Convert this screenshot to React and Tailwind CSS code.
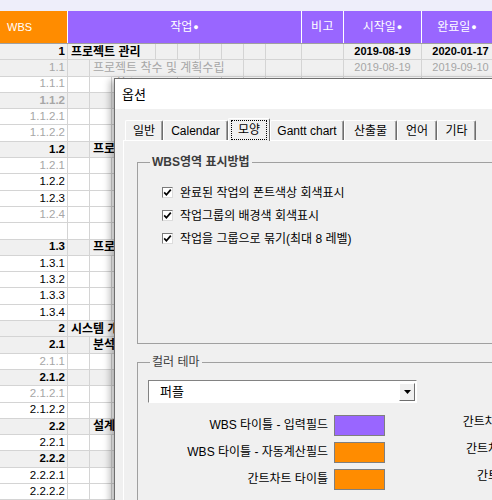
const ROWS = [
  { w: '1', lvl: 0, name: '프로젝트 관리', b: 1, g: 1, s: '2019-08-19', e: '2020-01-17' },
  { w: '1.1', lvl: 1, name: '프로젝트 착수 및 계획수립', g: 1, grey: 1, s: '2019-08-19', e: '2019-09-10' },
  { w: '1.1.1', lvl: 2, name: '착수보고', grey: 1 },
  { w: '1.1.2', lvl: 2, name: '계획수립', b: 1, g: 1, grey: 1 },
  { w: '1.1.2.1', lvl: 3, name: '일정계획', grey: 1 },
  { w: '1.1.2.2', lvl: 3, name: '자원계획', grey: 1 },
  { w: '1.2', lvl: 1, name: '프로젝트 실행', b: 1, g: 1 },
  { w: '1.2.1', lvl: 2, name: '주간보고', grey: 1 },
  { w: '1.2.2', lvl: 2, name: '월간보고' },
  { w: '1.2.3', lvl: 2, name: '이슈관리' },
  { w: '1.2.4', lvl: 2, name: '위험관리', grey: 1 },
  { w: '', lvl: 0, name: '' },
  { w: '1.3', lvl: 1, name: '프로젝트 종료', b: 1, g: 1 },
  { w: '1.3.1', lvl: 2, name: '완료보고' },
  { w: '1.3.2', lvl: 2, name: '검수' },
  { w: '1.3.3', lvl: 2, name: '인수인계' },
  { w: '1.3.4', lvl: 2, name: '종료' },
  { w: '2', lvl: 0, name: '시스템 개발', b: 1, g: 1 },
  { w: '2.1', lvl: 1, name: '분석', b: 1, g: 1 },
  { w: '2.1.1', lvl: 2, name: '요구사항 정의', grey: 1 },
  { w: '2.1.2', lvl: 2, name: '현행분석', b: 1, g: 1 },
  { w: '2.1.2.1', lvl: 3, name: '업무분석', grey: 1 },
  { w: '2.1.2.2', lvl: 3, name: '시스템분석' },
  { w: '2.2', lvl: 1, name: '설계', b: 1, g: 1 },
  { w: '2.2.1', lvl: 2, name: '아키텍처 설계' },
  { w: '2.2.2', lvl: 2, name: '상세설계', b: 1, g: 1 },
  { w: '2.2.2.1', lvl: 3, name: '화면설계' },
  { w: '2.2.2.2', lvl: 3, name: 'DB설계' },
];

const TABS = [
  ['일반', 38],
  ['Calendar', 65],
  ['모양', 42],
  ['Gantt chart', 74],
  ['산출물', 53],
  ['언어', 40],
  ['기타', 39],
];

const SWATCHES = [
  ['WBS 타이틀 - 입력필드', '#9966ff', '간트차트 바 - 진행작업'],
  ['WBS 타이틀 - 자동계산필드', '#ff8c00', '간트차트 - 주말배경색'],
  ['간트차트 타이틀', '#ff8c00', '간트차트 - 오늘날짜'],
];

function SheetRow({ r }) {
  const color = r.grey ? 'text-[#a6a6a6]' : 'text-black';
  const bg = r.g ? 'bg-[#f0f0f0]' : 'bg-white';
  return (
    <div className={`flex h-[16.3px] border-b border-[#d4d4d4] ${bg} ${color} ${r.b ? 'font-bold' : ''}`}>
      <div className="w-[68px] shrink-0 border-r border-[#d4d4d4] flex items-center justify-end pr-[2px] text-[11.5px]">
        {r.w}
      </div>
      <div className="relative flex w-[234px] shrink-0">
        {[0, 1, 2, 3, 4, 5, 6, 7, 8].map((i) => (
          <div key={i} className="w-[22px] shrink-0 border-r border-[#d4d4d4]" />
        ))}
        <div className="w-[36px] shrink-0 border-r border-[#d4d4d4]" />
        {r.name && (
          <span
            className={`absolute top-0 bottom-0 z-10 flex items-center whitespace-nowrap pl-[3px] pr-[2px] text-[12px] ${bg}`}
            style={{ left: r.lvl * 22 }}
          >
            {r.name}
          </span>
        )}
      </div>
      <div className="w-[42px] shrink-0 border-r border-[#d4d4d4]" />
      <div className="w-[78px] shrink-0 border-r border-[#d4d4d4] flex items-center justify-center text-[11px]">
        {r.s}
      </div>
      <div className="w-[78px] shrink-0 border-r border-[#d4d4d4] flex items-center justify-center text-[11px]">
        {r.e}
      </div>
    </div>
  );
}

function Check({ label }) {
  return (
    <div className="flex items-center h-[23px]">
      <div className="w-[11px] h-[11px] border border-t-[#7a7a7a] border-l-[#7a7a7a] border-b-[#dcdcdc] border-r-[#dcdcdc] bg-white flex items-center justify-center">
        <svg width="9" height="9" viewBox="0 0 9 9">
          <path d="M1.2 4.4 L3.4 6.8 L7.8 1.6" fill="none" stroke="#000" strokeWidth="1.7" />
        </svg>
      </div>
      <span className="ml-[7px] text-[12px] text-black">{label}</span>
    </div>
  );
}

export default function App() {
  return (
    <div className="relative w-[492px] h-[500px] overflow-hidden bg-white [font-family:'Liberation_Sans','Noto_Sans_CJK_KR',sans-serif] leading-none">
      {/* sheet */}
      <div className="h-[11px] bg-[#eeeefa]" />
      <div className="flex h-[33px] border-b border-[#a0a0a0] text-white text-[12px]">
        <div className="w-[68px] shrink-0 bg-[#ff8c00] flex items-center pl-[7px] text-[11px] border-r border-white">WBS</div>
        <div className="w-[234px] shrink-0 bg-[#9966ff] flex items-center justify-center border-r border-white">
          작업<span className="text-[9px] ml-[1px]">●</span>
        </div>
        <div className="w-[42px] shrink-0 bg-[#9966ff] flex items-center justify-center border-r border-white tracking-[0.5px]">비고</div>
        <div className="w-[78px] shrink-0 bg-[#9966ff] flex items-center justify-center border-r border-white">
          시작일<span className="text-[9px] ml-[1px]">●</span>
        </div>
        <div className="flex-1 bg-[#9966ff] flex items-center justify-center">
          완료일<span className="text-[9px] ml-[1px]">●</span>
        </div>
      </div>
      <div>
        {ROWS.map((r, i) => (
          <SheetRow key={i} r={r} />
        ))}
      </div>

      {/* options dialog */}
      <div className="absolute left-[114px] top-[78px] w-[420px] h-[440px] border border-[#6e6e6e] bg-[#f0f0f0] shadow-[-4px_2px_7px_rgba(0,0,0,0.28)] z-20">
        <div className="h-[30px] bg-white flex items-center pl-[7px] text-[13px] text-black">옵션</div>
        <div className="pt-[9px] pl-[8px]">
          <div className="flex items-end h-[22px] ml-[2px] text-[12px] text-black">
            {TABS.map(([t, w]) =>
              t === '모양' ? (
                <div
                  key={t}
                  className="relative z-10 -mb-[1px] h-[23px] shrink-0 bg-[#f0f0f0] border-l border-t border-white border-r border-r-[#6e6e6e] rounded-t-[2px] flex items-start justify-center pt-[1px]"
                  style={{ width: w }}
                >
                  <span className="border border-dotted border-black w-[36px] h-[20px] flex items-center justify-center">{t}</span>
                </div>
              ) : (
                <div
                  key={t}
                  className="h-[20px] shrink-0 bg-[#f0f0f0] border-l border-t border-white border-r border-r-[#6e6e6e] shadow-[inset_-1px_0_0_#a0a0a0] rounded-t-[2px] flex items-center justify-center"
                  style={{ width: w }}
                >
                  {t}
                </div>
              )
            )}
          </div>
          <div className="border-t border-l border-white h-[400px] pl-[13px] pt-[21px]">
            <div className="relative w-[400px] h-[182px] border border-[#a0a0a0] pl-[24px] pt-[18px]">
              <span className="absolute -top-[9px] left-[12px] px-[2px] bg-[#f0f0f0] leading-[16px] text-[12px] font-bold text-[#3c3c3c]">
                WBS영역 표시방법
              </span>
              <Check label="완료된 작업의 폰트색상 회색표시" />
              <Check label="작업그룹의 배경색 회색표시" />
              <Check label="작업을 그룹으로 묶기(최대 8 레벨)" />
            </div>
            <div className="relative mt-[18px] w-[520px] h-[160px] border border-[#a0a0a0] pl-[10px] pt-[17px]">
              <span className="absolute -top-[9px] left-[12px] px-[2px] bg-[#f0f0f0] leading-[16px] text-[12px] text-[#3c3c3c]">
                컬러 테마
              </span>
              <div className="w-[269px] h-[23px] border border-t-[#828282] border-l-[#828282] border-b-white border-r-white bg-white flex items-center">
                <span className="flex-1 pl-[11px] text-[13px] text-black">퍼플</span>
                <div className="w-[16px] h-[18px] mr-[1px] border border-t-white border-l-white border-b-[#6e6e6e] border-r-[#6e6e6e] bg-[#f0f0f0] flex items-center justify-center">
                  <svg width="7" height="4" viewBox="0 0 7 4">
                    <polygon points="0,0 7,0 3.5,4" fill="#000" />
                  </svg>
                </div>
              </div>
              <div className="mt-[12px] flex flex-col gap-[6px]">
                {SWATCHES.map(([a, c, b]) => (
                  <div key={a} className="flex h-[21px] items-center text-[12px] text-black whitespace-nowrap">
                    <span className="w-[180px] shrink-0 text-right -mt-[2px]">{a}</span>
                    <div className="ml-[6px] w-[51px] h-[21px] shrink-0 border border-[#7f7f7f]" style={{ backgroundColor: c }} />
                    <span className="w-[191px] shrink-0 text-right -mt-[7px]">{b}</span>
                    <div className="ml-[6px] w-[51px] h-[21px] shrink-0 border border-[#7f7f7f] bg-[#ff8c00]" />
                  </div>
                ))}
              </div>
            </div>
          </div>
        </div>
      </div>
    </div>
  );
}
